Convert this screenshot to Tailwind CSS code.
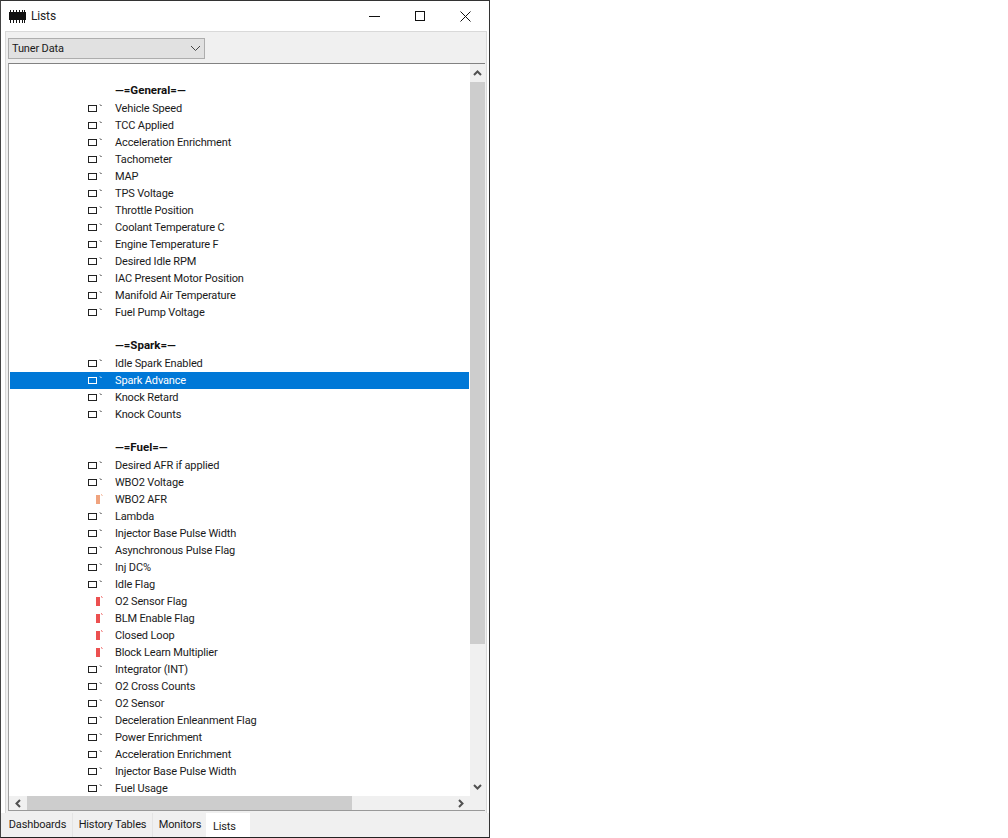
<!DOCTYPE html>
<html lang="en">
<head>
    <meta charset="UTF-8">
    <title>Lists</title>
    <script src="https://cdn.jsdelivr.net/npm/@tailwindcss/browser@4"></script>
</head>
<body class="bg-white font-['Roboto','Open_Sans',sans-serif] text-[11px] tracking-[-0.15px] text-[#1a1a1a] overflow-hidden">
    <div class="w-[490px] h-[838px] flex flex-col border-l border-t border-r border-b border-l-[#444] border-t-[#333] border-r-[#333] border-b-[#222] bg-white">
        <!-- title bar -->
        <div class="h-[30px] shrink-0 flex items-center bg-white">
            <svg class="ml-[8px]" width="17" height="13" viewBox="0 0 17 13" fill="#111">
                <rect x="0" y="2" width="17" height="8"/>
                <path d="M1 0h1v13H1zM4 0h1v13H4zM7 0h1v13H7zM10 0h1v13h-1zM13 0h1v13h-1zM15 0h1v13h-1z"/>
            </svg>
            <span class="ml-[5px] text-[12px] text-[#222]">Lists</span>
            <div class="ml-auto flex items-center">
                <svg class="mr-[35px]" width="11" height="11" viewBox="0 0 11 11"><path d="M0 5.5h11" stroke="#111"/></svg>
                <svg class="mr-[35px]" width="10" height="10" viewBox="0 0 10 10"><rect x="0.5" y="0.5" width="9" height="9" fill="none" stroke="#111"/></svg>
                <svg class="mr-[18px]" width="11" height="11" viewBox="0 0 11 11"><path d="M0.5 0.5l10 10M10.5 0.5l-10 10" stroke="#111"/></svg>
            </div>
        </div>
        <!-- main panel -->
        <div class="ml-[4px] mr-[2px] h-[782px] shrink-0 border-t border-l border-r border-[#d9d9d9] bg-[#f0f0f0] pl-[2px] pr-[1px] pt-[6px] flex flex-col">
            <div class="w-[197px] h-[21px] shrink-0 border border-[#adadad] bg-[#e1e1e1] flex items-center pl-[3px]">
                <span class="pt-[1px]">Tuner Data</span>
                <svg class="ml-auto mr-[3px]" width="11" height="7" viewBox="0 0 11 7"><path d="M1 1l4.5 4.5L10 1" fill="none" stroke="#444"/></svg>
            </div>
            <div class="mt-[4px] flex-1 min-h-0 border-t border-l border-b border-t-[#828282] border-l-[#a0a0a0] border-b-[#999] flex flex-col">
                <div class="h-[732px] shrink-0 flex">
                    <div class="flex-1 min-w-0 bg-white pt-[2px] overflow-hidden">
                        <div id="list" class="ml-[1px] mr-[1px]"></div>
                    </div>
                    <!-- vertical scrollbar -->
                    <div class="w-[15px] shrink-0 bg-[#f0f0f0] flex flex-col">
                        <div class="h-[18px] shrink-0 flex items-center justify-center">
                            <svg width="9" height="6" viewBox="0 0 9 6"><path d="M1 5l3.5-3.5L8 5" fill="none" stroke="#505050" stroke-width="2"/></svg>
                        </div>
                        <div class="h-[562px] shrink-0 bg-[#cdcdcd]"></div>
                        <div class="mt-auto h-[18px] shrink-0 flex items-center justify-center">
                            <svg width="9" height="6" viewBox="0 0 9 6"><path d="M1 1l3.5 3.5L8 1" fill="none" stroke="#505050" stroke-width="2"/></svg>
                        </div>
                    </div>
                </div>
                <!-- horizontal scrollbar -->
                <div class="flex-1 flex items-stretch bg-[#f0f0f0]">
                    <div class="w-[18px] shrink-0 flex items-center justify-center">
                        <svg width="6" height="9" viewBox="0 0 6 9"><path d="M5 1L1.5 4.5 5 8" fill="none" stroke="#505050" stroke-width="2"/></svg>
                    </div>
                    <div class="w-[325px] shrink-0 bg-[#cdcdcd]"></div>
                    <div class="ml-auto w-[27px] shrink-0 flex items-center justify-start">
                        <svg width="6" height="9" viewBox="0 0 6 9"><path d="M1 1l3.5 3.5L1 8" fill="none" stroke="#505050" stroke-width="2"/></svg>
                    </div>
                </div>
            </div>
            <div class="h-[2px] shrink-0"></div>
        </div>
        <!-- tabs -->
        <div class="flex-1 flex items-stretch bg-[#f0f0f0] pl-[2px]">
            <div class="w-[70px] flex items-center justify-center pt-[1px] border-r border-[#e4e4e4]">Dashboards</div>
            <div class="w-[80px] flex items-center justify-center pt-[1px] border-r border-[#e4e4e4]">History Tables</div>
            <div class="w-[53px] flex items-center justify-center pt-[1px] pl-[1px]">Monitors</div>
            <div class="w-[44px] flex items-center justify-start pl-[7px] pt-[4px] bg-white">Lists</div>
        </div>
    </div>
    <script>
        const rows = [
            ['blank'],
            ['head', '\u2014=General=\u2014'],
            ['off', 'Vehicle Speed'], ['off', 'TCC Applied'], ['off', 'Acceleration Enrichment'],
            ['off', 'Tachometer'], ['off', 'MAP'], ['off', 'TPS Voltage'], ['off', 'Throttle Position'],
            ['off', 'Coolant Temperature C'], ['off', 'Engine Temperature F'], ['off', 'Desired Idle RPM'],
            ['off', 'IAC Present Motor Position'], ['off', 'Manifold Air Temperature'], ['off', 'Fuel Pump Voltage'],
            ['blank'],
            ['head', '\u2014=Spark=\u2014'],
            ['off', 'Idle Spark Enabled'], ['sel', 'Spark Advance'], ['off', 'Knock Retard'], ['off', 'Knock Counts'],
            ['blank'],
            ['head', '\u2014=Fuel=\u2014'],
            ['off', 'Desired AFR if applied'], ['off', 'WBO2 Voltage'], ['warn', 'WBO2 AFR'], ['off', 'Lambda'],
            ['off', 'Injector Base Pulse Width'], ['off', 'Asynchronous Pulse Flag'], ['off', 'Inj DC%'], ['off', 'Idle Flag'],
            ['red', 'O2 Sensor Flag'], ['red', 'BLM Enable Flag'], ['red', 'Closed Loop'], ['red', 'Block Learn Multiplier'],
            ['off', 'Integrator (INT)'], ['off', 'O2 Cross Counts'], ['off', 'O2 Sensor'], ['off', 'Deceleration Enleanment Flag'],
            ['off', 'Power Enrichment'], ['off', 'Acceleration Enrichment'], ['off', 'Injector Base Pulse Width'], ['off', 'Fuel Usage']
        ];

        function box(stroke) {
            return `<svg width="16" height="10" viewBox="0 0 16 10"><rect x="0.5" y="1.5" width="8" height="6" fill="none" stroke="${stroke}"/><path d="M12 0.5l1.5 1.5" stroke="${stroke}"/></svg>`;
        }

        function flag(color) {
            return `<svg class="-mt-[2px]" width="16" height="10" viewBox="0 0 16 10"><rect x="8" y="1" width="4" height="9" fill="${color}"/><rect x="8" y="1" width="1" height="9" fill="${color}" opacity="0.6"/><path d="M13 0.5l1.5 1" stroke="${color}"/></svg>`;
        }

        const html = rows.map(([kind, label]) => {
            if (kind === 'blank') return '<div class="h-[17px]"></div>';
            if (kind === 'head') return `<div class="h-[17px] flex items-center pl-[105px] pb-[1px] font-bold text-[11.5px] tracking-normal text-[#111]">${label}</div>`;
            const rowClass = kind === 'sel' ? 'bg-[#0078d7] text-white' : '';
            let icon = box('#222');
            if (kind === 'sel') icon = box('#ffffff');
            if (kind === 'warn') icon = flag('#f0a37e');
            if (kind === 'red') icon = flag('#ec5050');
            return `<div class="h-[17px] flex items-center pl-[78px] whitespace-nowrap ${rowClass}"><span class="w-[27px] shrink-0 flex">${icon}</span><span class="pt-[1px]">${label}</span></div>`;
        }).join('');
        document.getElementById('list').innerHTML = html;
    </script>
</body>
</html>
